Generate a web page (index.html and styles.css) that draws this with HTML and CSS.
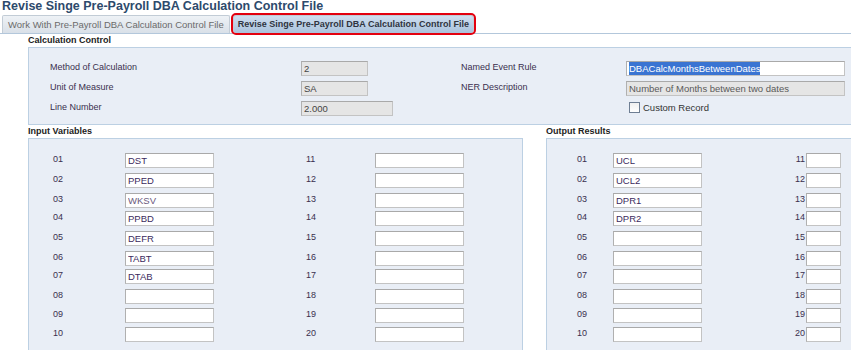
FILE: index.html
```html
<!DOCTYPE html>
<html lang="en">
<head>
    <meta charset="UTF-8">
    <title>Revise Singe Pre-Payroll DBA Calculation Control File</title>
    <link rel="stylesheet" href="styles.css">
</head>
<body>
    <h1 class="page-title">Revise Singe Pre-Payroll DBA Calculation Control File</h1>

    <div class="tabs">
        <a href="#" class="tab">Work With Pre-Payroll DBA Calculation Control File</a>
        <a href="#" class="tab tab-active">Revise Singe Pre-Payroll DBA Calculation Control File</a>
    </div>

    <!-- 计算控制 -->
    <div class="section calc-section">
        <div class="section-label">Calculation Control</div>
        <div class="panel calc-panel">
            <span class="field-label">Method of Calculation</span>
            <input class="field field-ro field-short" value="2" readonly>
            <span class="field-label">Named Event Rule</span>
            <div class="field field-long"><span class="sel-text">DBACalcMonthsBetweenDates</span></div>

            <span class="field-label">Unit of Measure</span>
            <input class="field field-ro field-short" value="SA" readonly>
            <span class="field-label">NER Description</span>
            <input class="field field-ro field-long field-dim" value="Number of Months between two dates" readonly>

            <span class="field-label">Line Number</span>
            <input class="field field-ro field-mid" value="2.000" readonly>
            <span></span>
            <label class="check-row"><span class="check-box"></span>Custom Record</label>
        </div>
    </div>

    <div class="lower">
        <!-- 输入变量 -->
        <div class="section input-section">
            <div class="section-label">Input Variables</div>
            <div class="panel var-panel">
                <span class="num">01</span><input class="field var-field" value="DST"><span class="num">11</span><input class="field var-field" value="">
                <span class="num">02</span><input class="field var-field" value="PPED"><span class="num">12</span><input class="field var-field" value="">
                <span class="num">03</span><input class="field var-field field-grey-text" value="WKSV"><span class="num">13</span><input class="field var-field" value="">
                <span class="num">04</span><input class="field var-field" value="PPBD"><span class="num">14</span><input class="field var-field" value="">
                <span class="num">05</span><input class="field var-field" value="DEFR"><span class="num">15</span><input class="field var-field" value="">
                <span class="num">06</span><input class="field var-field" value="TABT"><span class="num">16</span><input class="field var-field" value="">
                <span class="num">07</span><input class="field var-field" value="DTAB"><span class="num">17</span><input class="field var-field" value="">
                <span class="num">08</span><input class="field var-field" value=""><span class="num">18</span><input class="field var-field" value="">
                <span class="num">09</span><input class="field var-field" value=""><span class="num">19</span><input class="field var-field" value="">
                <span class="num">10</span><input class="field var-field" value=""><span class="num">20</span><input class="field var-field" value="">
            </div>
        </div>

        <!-- 输出结果 -->
        <div class="section output-section">
            <div class="section-label">Output Results</div>
            <div class="panel out-panel">
                <span class="num">01</span><input class="field var-field" value="UCL"><span class="num num-right">11</span><input class="field small-field" value="">
                <span class="num">02</span><input class="field var-field" value="UCL2"><span class="num num-right">12</span><input class="field small-field" value="">
                <span class="num">03</span><input class="field var-field" value="DPR1"><span class="num num-right">13</span><input class="field small-field" value="">
                <span class="num">04</span><input class="field var-field" value="DPR2"><span class="num num-right">14</span><input class="field small-field" value="">
                <span class="num">05</span><input class="field var-field" value=""><span class="num num-right">15</span><input class="field small-field" value="">
                <span class="num">06</span><input class="field var-field" value=""><span class="num num-right">16</span><input class="field small-field" value="">
                <span class="num">07</span><input class="field var-field" value=""><span class="num num-right">17</span><input class="field small-field" value="">
                <span class="num">08</span><input class="field var-field" value=""><span class="num num-right">18</span><input class="field small-field" value="">
                <span class="num">09</span><input class="field var-field" value=""><span class="num num-right">19</span><input class="field small-field" value="">
                <span class="num">10</span><input class="field var-field" value=""><span class="num num-right">20</span><input class="field small-field" value="">
            </div>
        </div>
    </div>
</body>
</html>
```

FILE: styles.css
```css
:root {
    --title-color: #2d4a6c;
    --label-color: #3a2f4e;
    --panel-bg: #e9eef6;
    --panel-border: #bcd0e3;
    --line-color: #b3c7db;
    --field-border: #c3c3c3;
    --field-ro-bg: #e5e5e5;
}

body {
    margin: 0;
    font-family: "Liberation Sans", Arial, sans-serif;
    font-size: 9px;
    color: var(--label-color);
    background: white;
    overflow: hidden;
}

.page-title {
    margin: 0;
    padding: 0 0 0 2px;
    height: 14px;
    line-height: 12px;
    font-size: 12.5px;
    font-weight: bold;
    color: var(--title-color);
}

.tabs {
    display: flex;
    align-items: flex-end;
    gap: 3px;
    padding-left: 2px;
    height: 19px;
    border-bottom: 1px solid var(--line-color);
}

.tab {
    display: block;
    height: 17px;
    line-height: 17px;
    padding: 0 5px;
    font-size: 9.5px;
    color: #6b6b6b;
    text-decoration: none;
    background: linear-gradient(#eef2f6, #d9e0e8);
    border: 1px solid #c2ccd6;
    border-bottom: none;
    border-radius: 2px 2px 0 0;
}

.tab-active {
    height: 17px;
    padding: 0 4px;
    color: #2f3440;
    font-size: 9px;
    font-weight: bold;
    background: linear-gradient(#cfdef0, #a9c2dc);
    outline: 2px solid #e3000f;
    outline-offset: 0;
    border-radius: 3px;
}

.section {
    padding-left: 28px;
}

.section-label {
    height: 13px;
    line-height: 13px;
    font-weight: bold;
    font-size: 9px;
    color: #222;
}

.panel {
    background: var(--panel-bg);
    border: 1px solid var(--panel-border);
}

.calc-panel {
    height: 78px;
    box-sizing: border-box;
    border-right: none;
    padding: 13px 0 0 21px;
    display: grid;
    grid-template-columns: 251px 160px 165px 219px;
    grid-auto-rows: 20px;
    align-items: start;
}

.field-label {
    line-height: 11px;
    padding-top: 1px;
}

.field {
    box-sizing: border-box;
    height: 15px;
    margin: 0;
    padding: 0 2px;
    font-family: "Liberation Sans", Arial, sans-serif;
    font-size: 9.5px;
    line-height: 13px;
    color: #3b2a5e;
    background: white;
    border: 1px solid var(--field-border);
    border-top-color: #a9a9a9;
    border-left-color: #b0b0b0;
    outline: none;
}

.field-ro {
    background: var(--field-ro-bg);
    color: #444;
}

.field-short {
    width: 67px;
}

.field-mid {
    width: 92px;
}

.field-long {
    width: 219px;
}

.field-dim {
    color: #5a5a5a;
}

.sel-text {
    display: inline-block;
    color: white;
    background: #3a74d2;
}

.field-grey-text {
    color: #6a5a7e;
}

.check-row {
    display: flex;
    align-items: center;
    gap: 3px;
    padding: 1px 0 0 3px;
    font-size: 9.5px;
    color: #333;
}

.check-box {
    width: 9px;
    height: 9px;
    border: 1px solid #6e7e93;
    background: linear-gradient(#f0f0f0, white);
}

.lower {
    display: flex;
}

.input-section {
    flex-shrink: 0;
    width: 495px;
}

.output-section {
    flex: 1;
    padding-left: 23px;
}

.var-panel,
.out-panel {
    box-sizing: border-box;
    height: 220px;
    display: grid;
    grid-template-rows: 20px 20px 18px 20px 20px 18px 20px 19px 19px 19px;
    align-items: start;
}

.var-panel {
    padding: 14px 0 0 24px;
    grid-template-columns: 72px 181px 69px 89px;
}

.out-panel {
    border-right: none;
    padding: 14px 0 0 30px;
    grid-template-columns: 36px 89px 104px 35px;
}

.num {
    font-size: 9px;
    line-height: 11px;
    padding-top: 1px;
}

.num-right {
    text-align: right;
    padding-right: 1px;
}

.var-field {
    width: 89px;
}

.small-field {
    width: 35px;
}
```
